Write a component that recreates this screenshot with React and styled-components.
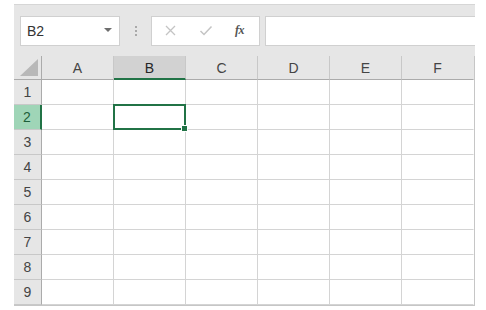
import styled, { createGlobalStyle } from 'styled-components';

const GlobalStyle = createGlobalStyle`
  body {
    margin: 0;
    background: #ffffff;
    font-family: 'Liberation Sans', Arial, sans-serif;
  }
`;

const Frame = styled.div`
  margin: 4px 0 0 14px;
  width: 461px;
  display: flex;
  flex-direction: column;
  border-top: 1px solid #d6d6d6;
  background: #e6e6e6;
`;

const Toolbar = styled.div`
  display: flex;
  align-items: center;
  height: 51px;
  padding: 0 0 0 6px;
  box-sizing: border-box;
`;

const NameBox = styled.div`
  width: 100px;
  height: 30px;
  box-sizing: border-box;
  border: 1px solid #d0d0d0;
  background: #ffffff;
  display: flex;
  align-items: center;
  justify-content: space-between;
  padding: 0 7px 0 6px;
  font-size: 14px;
  color: #333;
`;

const Caret = styled.span`
  width: 0;
  height: 0;
  border-left: 4px solid transparent;
  border-right: 4px solid transparent;
  border-top: 4px solid #6e6e6e;
  margin-bottom: 1px;
`;

const Dots = styled.div`
  width: 31px;
  display: flex;
  flex-direction: column;
  align-items: center;
  gap: 2px;
  span {
    width: 2px;
    height: 2px;
    background: #a9a9a9;
  }
`;

const ButtonBox = styled.div`
  width: 109px;
  height: 30px;
  box-sizing: border-box;
  border: 1px solid #d0d0d0;
  background: #ffffff;
  display: flex;
  align-items: center;
  padding-left: 12px;
  gap: 22px;
`;

const Fx = styled.span`
  font-family: 'Liberation Serif', 'Times New Roman', serif;
  font-style: italic;
  font-weight: bold;
  font-size: 12px;
  color: #555;
  letter-spacing: -0.5px;
`;

const Formula = styled.div`
  flex: 1;
  height: 30px;
  margin-left: 5px;
  box-sizing: border-box;
  border: 1px solid #d0d0d0;
  border-right: none;
  background: #ffffff;
`;

const Grid = styled.div`
  display: grid;
  grid-template-columns: 28px repeat(6, 72px);
  grid-template-rows: 24px repeat(9, 25px);
  width: 460px;
  background: #ffffff;
  border-right: 1px solid #c6c6c6;
  border-bottom: 1px solid #c6c6c6;
  font-size: 14px;
`;

const Corner = styled.div`
  background: #e6e6e6;
  border-right: 1px solid #ababab;
  border-bottom: 1px solid #ababab;
  box-sizing: border-box;
  display: flex;
  align-items: flex-end;
  justify-content: flex-end;
  padding: 0 3px 3px 0;
`;

const ColHead = styled.div`
  background: ${(p) => (p.$active ? '#d2d2d2' : '#e6e6e6')};
  border-right: 1px solid ${(p) => (p.$last ? 'transparent' : '#c8c8c8')};
  border-bottom: ${(p) => (p.$active ? '2px solid #217346' : '1px solid #ababab')};
  box-sizing: border-box;
  display: flex;
  align-items: center;
  justify-content: center;
  color: ${(p) => (p.$active ? '#262626' : '#444')};
  padding-top: 1px;
`;

const RowHead = styled.div`
  background: ${(p) => (p.$active ? '#9fd5b7' : '#e6e6e6')};
  border-right: ${(p) => (p.$active ? '2px solid #217346' : '1px solid #ababab')};
  border-bottom: 1px solid #c8c8c8;
  box-sizing: border-box;
  display: flex;
  align-items: center;
  justify-content: center;
  color: ${(p) => (p.$active ? '#1d5e3a' : '#444')};
`;

const Cell = styled.div`
  position: relative;
  border-right: 1px solid ${(p) => (p.$last ? 'transparent' : '#d4d4d4')};
  border-bottom: 1px solid #d4d4d4;
  box-sizing: border-box;
`;

const Selection = styled.div`
  position: absolute;
  left: -1px;
  top: -1px;
  right: -1px;
  bottom: -1px;
  border: 2px solid #217346;
  z-index: 2;
`;

const Handle = styled.span`
  position: absolute;
  right: -4px;
  bottom: -4px;
  width: 5px;
  height: 5px;
  background: #217346;
  border: 1px solid #ffffff;
`;

const cols = ['A', 'B', 'C', 'D', 'E', 'F'];
const rows = [1, 2, 3, 4, 5, 6, 7, 8, 9];

const App = () => {
  return (
    <>
      <GlobalStyle />
      <Frame>
        <Toolbar>
          <NameBox>
            B2
            <Caret />
          </NameBox>
          <Dots>
            <span />
            <span />
            <span />
          </Dots>
          <ButtonBox>
            <svg width="13" height="13" viewBox="0 0 13 13">
              <path d="M2 2 L11 11 M11 2 L2 11" stroke="#c4c4c4" strokeWidth="1.3" />
            </svg>
            <svg width="14" height="13" viewBox="0 0 14 13">
              <path d="M1.5 7 L5 10.5 L12.5 2.5" stroke="#c4c4c4" strokeWidth="1.5" fill="none" />
            </svg>
            <Fx>fx</Fx>
          </ButtonBox>
          <Formula />
        </Toolbar>
        <Grid>
          <Corner>
            <svg width="18" height="17" viewBox="0 0 18 17">
              <path d="M18 0 L18 17 L0 17 Z" fill="#b8b8b8" />
            </svg>
          </Corner>
          {cols.map((c, i) => (
            <ColHead key={c} $active={c === 'B'} $last={i === cols.length - 1}>
              {c}
            </ColHead>
          ))}
          {rows.map((r) => [
            <RowHead key={'h' + r} $active={r === 2}>
              {r}
            </RowHead>,
            ...cols.map((c, i) => (
              <Cell key={c + r} $last={i === cols.length - 1}>
                {r === 2 && c === 'B' && (
                  <Selection>
                    <Handle />
                  </Selection>
                )}
              </Cell>
            )),
          ])}
        </Grid>
      </Frame>
    </>
  );
};

export default App;
